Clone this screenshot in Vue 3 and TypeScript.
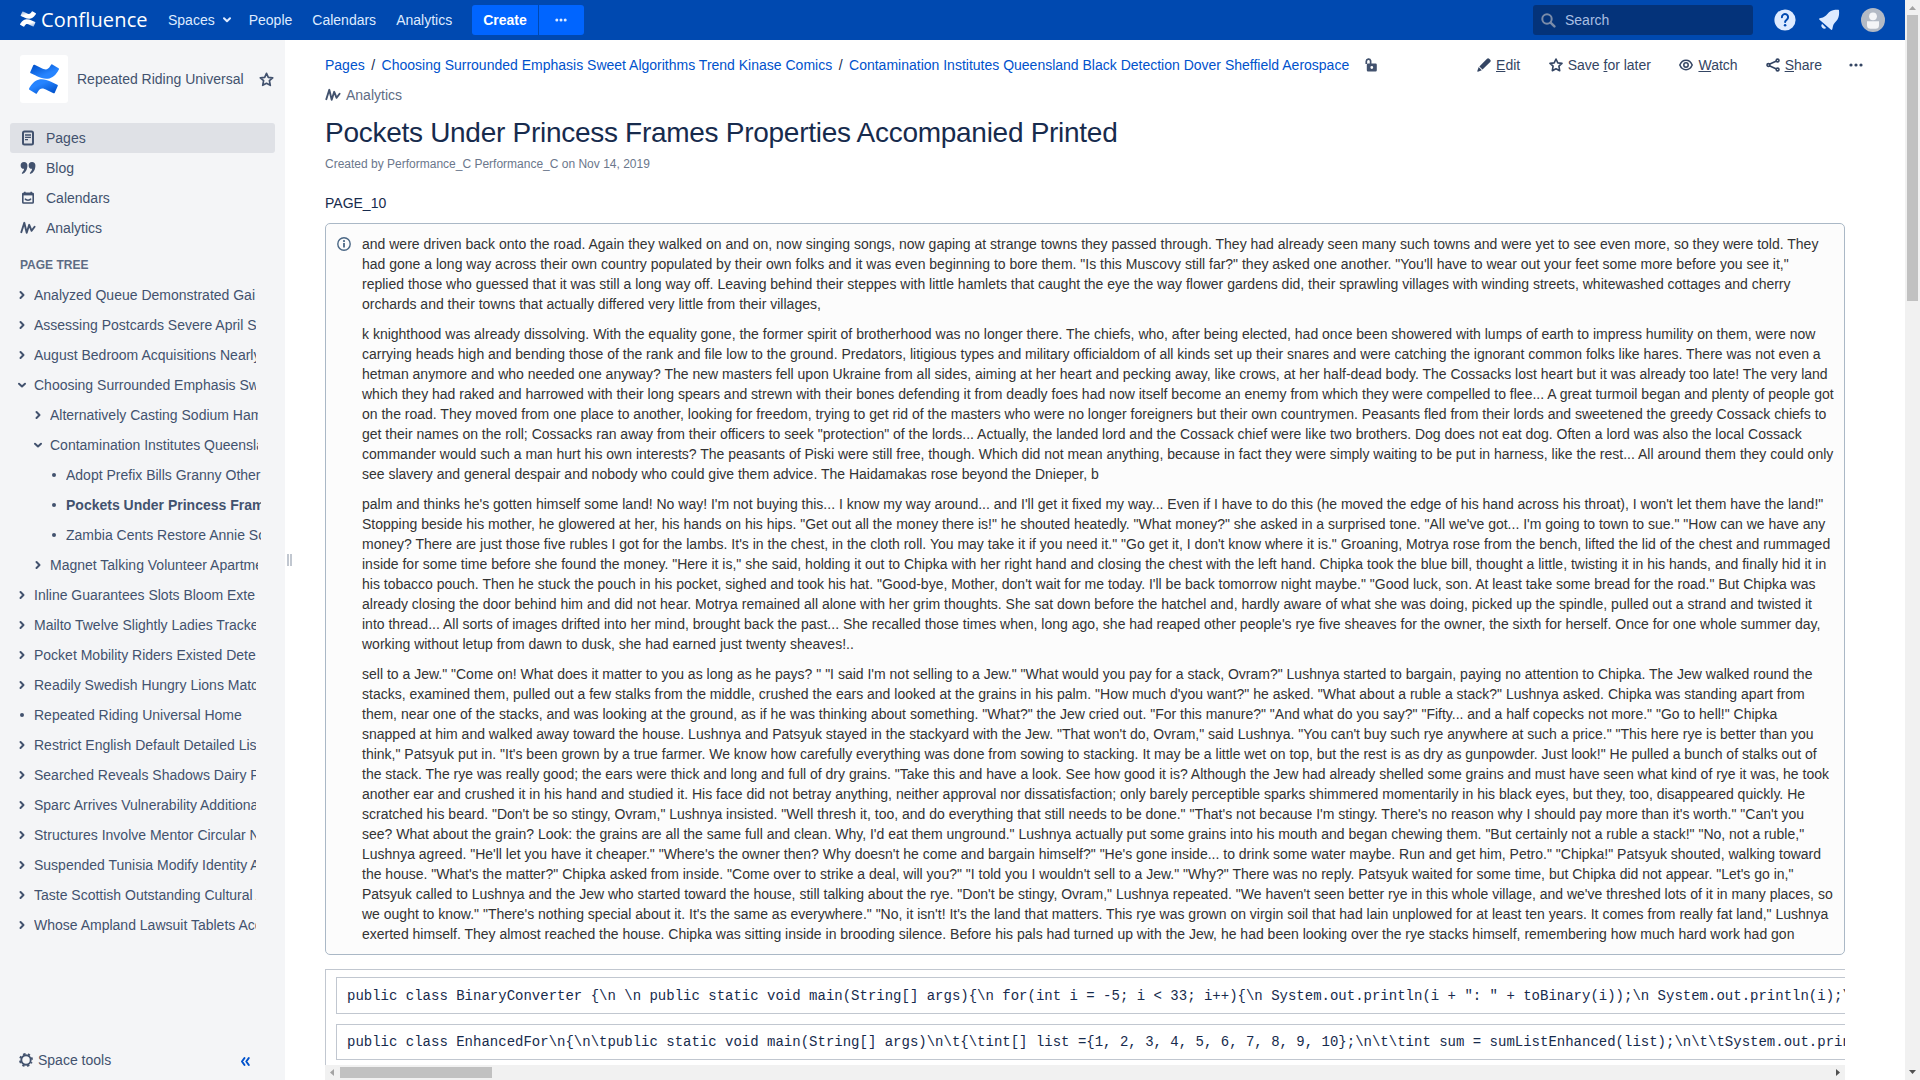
<script setup lang="ts">
interface NavItem {
  label: string
  icon: string
  active?: boolean
}
interface TreeRow {
  label: string
  level: number
  marker: 'closed' | 'open' | 'leaf'
  current?: boolean
}

const menu: string[] = ['People', 'Calendars', 'Analytics']

const nav: NavItem[] = [
  { label: 'Pages', icon: 'page', active: true },
  { label: 'Blog', icon: 'quote' },
  { label: 'Calendars', icon: 'calendar' },
  { label: 'Analytics', icon: 'pulse' },
]

const tree: TreeRow[] = [
  { label: 'Analyzed Queue Demonstrated Gai', level: 0, marker: 'closed' },
  { label: 'Assessing Postcards Severe April S', level: 0, marker: 'closed' },
  { label: 'August Bedroom Acquisitions Nearly', level: 0, marker: 'closed' },
  { label: 'Choosing Surrounded Emphasis Sweet', level: 0, marker: 'open' },
  { label: 'Alternatively Casting Sodium Ham', level: 1, marker: 'closed' },
  { label: 'Contamination Institutes Queensland', level: 1, marker: 'open' },
  { label: 'Adopt Prefix Bills Granny Other', level: 2, marker: 'leaf' },
  { label: 'Pockets Under Princess Frames', level: 2, marker: 'leaf', current: true },
  { label: 'Zambia Cents Restore Annie So', level: 2, marker: 'leaf' },
  { label: 'Magnet Talking Volunteer Apartments', level: 1, marker: 'closed' },
  { label: 'Inline Guarantees Slots Bloom Exte', level: 0, marker: 'closed' },
  { label: 'Mailto Twelve Slightly Ladies Tracked', level: 0, marker: 'closed' },
  { label: 'Pocket Mobility Riders Existed Dete', level: 0, marker: 'closed' },
  { label: 'Readily Swedish Hungry Lions Match', level: 0, marker: 'closed' },
  { label: 'Repeated Riding Universal Home', level: 0, marker: 'leaf' },
  { label: 'Restrict English Default Detailed Lis', level: 0, marker: 'closed' },
  { label: 'Searched Reveals Shadows Dairy P', level: 0, marker: 'closed' },
  { label: 'Sparc Arrives Vulnerability Additional', level: 0, marker: 'closed' },
  { label: 'Structures Involve Mentor Circular N', level: 0, marker: 'closed' },
  { label: 'Suspended Tunisia Modify Identity A', level: 0, marker: 'closed' },
  { label: 'Taste Scottish Outstanding Cultural A', level: 0, marker: 'closed' },
  { label: 'Whose Ampland Lawsuit Tablets Acc', level: 0, marker: 'closed' },
]

const paragraphs: string[] = [
  `and were driven back onto the road. Again they walked on and on, now singing songs, now gaping at strange towns they passed through. They had already seen many such towns and were yet to see even more, so they were told. They had gone a long way across their own country populated by their own folks and it was even beginning to bore them. "Is this Muscovy still far?" they asked one another. "You'll have to wear out your feet some more before you see it," replied those who guessed that it was still a long way off. Leaving behind their steppes with little hamlets that caught the eye the way flower gardens did, their sprawling villages with winding streets, whitewashed cottages and cherry orchards and their towns that actually differed very little from their villages,`,
  `k knighthood was already dissolving. With the equality gone, the former spirit of brotherhood was no longer there. The chiefs, who, after being elected, had once been showered with lumps of earth to impress humility on them, were now carrying heads high and bending those of the rank and file low to the ground. Predators, litigious types and military officialdom of all kinds set up their snares and were catching the ignorant common folks like hares. There was not even a hetman anymore and who needed one anyway? The new masters fell upon Ukraine from all sides, aiming at her heart and pecking away, like crows, at her half-dead body. The Cossacks lost heart but it was already too late! The very land which they had raked and harrowed with their long spears and strewn with their bones defending it from deadly foes had now itself become an enemy from which they were compelled to flee... A great turmoil began and plenty of people got on the road. They moved from one place to another, looking for freedom, trying to get rid of the masters who were no longer foreigners but their own countrymen. Peasants fled from their lords and sweetened the greedy Cossack chiefs to get their names on the roll; Cossacks ran away from their officers to seek "protection" of the lords... Actually, the landed lord and the Cossack chief were like two brothers. Dog does not eat dog. Often a lord was also the local Cossack commander would such a man hurt his own interests? The peasants of Piski were still free, though. Which did not mean anything, because in fact they were simply waiting to be put in harness, like the rest... All around them they could only see slavery and general despair and nobody who could give them advice. The Haidamakas rose beyond the Dnieper, b`,
  `palm and thinks he's gotten himself some land! No way! I'm not buying this... I know my way around... and I'll get it fixed my way... Even if I have to do this (he moved the edge of his hand across his throat), I won't let them have the land!" Stopping beside his mother, he glowered at her, his hands on his hips. "Get out all the money there is!" he shouted heatedly. "What money?" she asked in a surprised tone. "All we've got... I'm going to town to sue." "How can we have any money? There are just those five rubles I got for the lambs. It's in the chest, in the cloth roll. You may take it if you need it." "Go get it, I don't know where it is." Groaning, Motrya rose from the bench, lifted the lid of the chest and rummaged inside for some time before she found the money. "Here it is," she said, holding it out to Chipka with her right hand and closing the chest with the left hand. Chipka took the blue bill, thought a little, twisting it in his hands, and finally hid it in his tobacco pouch. Then he stuck the pouch in his pocket, sighed and took his hat. "Good-bye, Mother, don't wait for me today. I'll be back tomorrow night maybe." "Good luck, son. At least take some bread for the road." But Chipka was already closing the door behind him and did not hear. Motrya remained all alone with her grim thoughts. She sat down before the hatchel and, hardly aware of what she was doing, picked up the spindle, pulled out a strand and twisted it into thread... All sorts of images drifted into her mind, brought back the past... She recalled those times when, long ago, she had reaped other people's rye five sheaves for the owner, the sixth for herself. Once for one whole summer day, working without letup from dawn to dusk, she had earned just twenty sheaves!..`,
  `sell to a Jew." "Come on! What does it matter to you as long as he pays? " "I said I'm not selling to a Jew." "What would you pay for a stack, Ovram?" Lushnya started to bargain, paying no attention to Chipka. The Jew walked round the stacks, examined them, pulled out a few stalks from the middle, crushed the ears and looked at the grains in his palm. "How much d'you want?" he asked. "What about a ruble a stack?" Lushnya asked. Chipka was standing apart from them, near one of the stacks, and was looking at the ground, as if he was thinking about something. "What?" the Jew cried out. "For this manure?" "And what do you say?" "Fifty... and a half copecks not more." "Go to hell!" Chipka snapped at him and walked away toward the house. Lushnya and Patsyuk stayed in the stackyard with the Jew. "That won't do, Ovram," said Lushnya. "You can't buy such rye anywhere at such a price." "This here rye is better than you think," Patsyuk put in. "It's been grown by a true farmer. We know how carefully everything was done from sowing to stacking. It may be a little wet on top, but the rest is as dry as gunpowder. Just look!" He pulled a bunch of stalks out of the stack. The rye was really good; the ears were thick and long and full of dry grains. "Take this and have a look. See how good it is? Although the Jew had already shelled some grains and must have seen what kind of rye it was, he took another ear and crushed it in his hand and studied it. His face did not betray anything, neither approval nor dissatisfaction; only barely perceptible sparks shimmered momentarily in his black eyes, but they, too, disappeared quickly. He scratched his beard. "Don't be so stingy, Ovram," Lushnya insisted. "Well thresh it, too, and do everything that still needs to be done." "That's not because I'm stingy. There's no reason why I should pay more than it's worth." "Can't you see? What about the grain? Look: the grains are all the same full and clean. Why, I'd eat them unground." Lushnya actually put some grains into his mouth and began chewing them. "But certainly not a ruble a stack!" "No, not a ruble," Lushnya agreed. "He'll let you have it cheaper." "Where's the owner then? Why doesn't he come and bargain himself?" "He's gone inside... to drink some water maybe. Run and get him, Petro." "Chipka!" Patsyuk shouted, walking toward the house. "What's the matter?" Chipka asked from inside. "Come over to strike a deal, will you?" "I told you I wouldn't sell to a Jew." "Why?" There was no reply. Patsyuk waited for some time, but Chipka did not appear. "Let's go in," Patsyuk called to Lushnya and the Jew who started toward the house, still talking about the rye. "Don't be stingy, Ovram," Lushnya repeated. "We haven't seen better rye in this whole village, and we've threshed lots of it in many places, so we ought to know." "There's nothing special about it. It's the same as everywhere." "No, it isn't! It's the land that matters. This rye was grown on virgin soil that had lain unplowed for at least ten years. It comes from really fat land," Lushnya exerted himself. They almost reached the house. Chipka was sitting inside in brooding silence. Before his pals had turned up with the Jew, he had been looking over the rye stacks himself, remembering how much hard work had gon`,
]

const snippets: string[] = [
  String.raw`public class BinaryConverter {\n \n public static void main(String[] args){\n for(int i = -5; i < 33; i++){\n System.out.println(i + ": " + toBinary(i));\n System.out.println(i);\n`,
  String.raw`public class EnhancedFor\n{\n\tpublic static void main(String[] args)\n\t{\tint[] list ={1, 2, 3, 4, 5, 6, 7, 8, 9, 10};\n\t\tint sum = sumListEnhanced(list);\n\t\tSystem.out.println(`,
]
</script>

<template>
  <div class="screen">
    <div class="app">
      <header class="header">
        <div class="brand">
          <svg class="brand-mark" width="16" height="16" viewBox="0 0 24 24">
            <defs>
              <linearGradient id="w1" x1="1" y1="1" x2="0.3" y2="0">
                <stop offset="0" stop-color="#fff" stop-opacity="0.5" /><stop offset="0.5" stop-color="#fff" /><stop offset="1" stop-color="#fff" />
              </linearGradient>
              <linearGradient id="w2" x1="0" y1="0" x2="0.7" y2="1">
                <stop offset="0" stop-color="#fff" stop-opacity="0.5" /><stop offset="0.5" stop-color="#fff" /><stop offset="1" stop-color="#fff" />
              </linearGradient>
            </defs>
            <path fill="url(#w1)" d="M.87 18.257c-.248.382-.53.875-.763 1.245a.764.764 0 0 0 .255 1.04l4.965 3.054a.764.764 0 0 0 1.058-.26c.199-.332.454-.763.733-1.221 1.967-3.247 3.945-2.853 7.508-1.146l4.957 2.337a.764.764 0 0 0 1.028-.382l2.364-5.346a.764.764 0 0 0-.382-1 599.851 599.851 0 0 1-4.965-2.361C10.911 10.97 5.224 11.185.87 18.257z" />
            <path fill="url(#w2)" d="M23.131 5.743c.249-.405.531-.875.764-1.25a.764.764 0 0 0-.256-1.034L18.675.404a.764.764 0 0 0-1.058.26c-.195.335-.451.763-.734 1.225-1.966 3.246-3.945 2.85-7.508 1.146L4.437.694a.764.764 0 0 0-1.027.382L1.046 6.422a.764.764 0 0 0 .382 1c1.039.49 3.105 1.467 4.965 2.361 6.698 3.246 12.392 3.029 16.738-4.04z" />
          </svg>
          <span class="brand-name">Confluence</span>
        </div>
        <nav class="menu">
          <a class="spaces">Spaces
            <svg width="8" height="6" viewBox="0 0 8 6"><path d="M1 1.2 4 4.2 7 1.2" fill="none" stroke="currentColor" stroke-width="2" stroke-linecap="round" stroke-linejoin="round" /></svg>
          </a>
          <a v-for="m in menu" :key="m">{{ m }}</a>
        </nav>
        <div class="create">
          <button class="create-main">Create</button>
          <button class="create-more">
            <svg width="12" height="4" viewBox="0 0 12 4" fill="#deebff"><circle cx="1.8" cy="2" r="1.5" /><circle cx="6" cy="2" r="1.5" /><circle cx="10.2" cy="2" r="1.5" /></svg>
          </button>
        </div>
        <div class="search">
          <svg width="15" height="15" viewBox="0 0 15 15"><circle cx="6" cy="6" r="4.7" fill="none" stroke="#7b8ca9" stroke-width="2" /><path d="M9.6 9.6 13.4 13.4" stroke="#7b8ca9" stroke-width="2.4" stroke-linecap="round" /></svg>
          <span>Search</span>
        </div>
        <svg class="help" width="22" height="22" viewBox="0 0 22 22">
          <circle cx="11" cy="11" r="10.6" fill="#deebff" />
          <path d="M7.9 8.2a3.1 3.1 0 1 1 4.7 2.6c-1 .6-1.5 1.1-1.5 2.3" fill="none" stroke="#0049b0" stroke-width="2" stroke-linecap="round" />
          <circle cx="11.1" cy="16.2" r="1.3" fill="#0049b0" />
        </svg>
        <svg class="bell" width="22" height="22" viewBox="0 0 22 22" fill="#deebff">
          <path d="M21 1.2c.3 3.2.2 6.500-1.500 9.300-1.800 2.800-3.900 3.900-4.500 6.500l-.7 3.200c-.2.800-.9.900-1.500.3L1.500 10.800c-.7-.6-.5-1.300.3-1.500l3.100-.9C7.500 7.700 8.600 5.600 11 3.300c2.600-2.400 6.200-2.700 9.400-2.600.3 0 .6.200.6.500z" />
          <path d="M4 14.800 8.200 19a3 3 0 0 1-4.200-4.200z" />
        </svg>
        <svg class="avatar" width="24" height="24" viewBox="0 0 24 24">
          <circle cx="12" cy="12" r="12" fill="#b3bac5" />
          <circle cx="12" cy="8.300" r="3.900" fill="#f4f5f7" />
          <path d="M6 13.300h12v4a3.500 3.500 0 0 1-3.500 3.500h-5A3.500 3.500 0 0 1 6 17.300z" fill="#f4f5f7" />
        </svg>
      </header>

      <div class="body">
        <aside class="sidebar">
          <div class="space">
            <div class="space-logo">
              <svg width="30" height="30" viewBox="0 0 24 24">
                <defs>
                  <linearGradient id="b1" x1="1" y1="1" x2="0.2" y2="0.1">
                    <stop offset="0.1" stop-color="#0052cc" /><stop offset="0.75" stop-color="#2684ff" />
                  </linearGradient>
                  <linearGradient id="b2" x1="0" y1="0" x2="0.8" y2="0.9">
                    <stop offset="0.1" stop-color="#0052cc" /><stop offset="0.75" stop-color="#2684ff" />
                  </linearGradient>
                </defs>
                <path fill="url(#b1)" d="M.87 18.257c-.248.382-.53.875-.763 1.245a.764.764 0 0 0 .255 1.04l4.965 3.054a.764.764 0 0 0 1.058-.26c.199-.332.454-.763.733-1.221 1.967-3.247 3.945-2.853 7.508-1.146l4.957 2.337a.764.764 0 0 0 1.028-.382l2.364-5.346a.764.764 0 0 0-.382-1 599.851 599.851 0 0 1-4.965-2.361C10.911 10.97 5.224 11.185.87 18.257z" />
                <path fill="url(#b2)" d="M23.131 5.743c.249-.405.531-.875.764-1.25a.764.764 0 0 0-.256-1.034L18.675.404a.764.764 0 0 0-1.058.26c-.195.335-.451.763-.734 1.225-1.966 3.246-3.945 2.85-7.508 1.146L4.437.694a.764.764 0 0 0-1.027.382L1.046 6.422a.764.764 0 0 0 .382 1c1.039.49 3.105 1.467 4.965 2.361 6.698 3.246 12.392 3.029 16.738-4.04z" />
              </svg>
            </div>
            <span class="space-name">Repeated Riding Universal</span>
            <svg width="15" height="15" viewBox="0 0 15 15"><path d="M7.500 1.300 9.300 5.300 13.700 5.800 10.400 8.700 11.300 13.300 7.500 11.300 3.700 13.300 4.600 8.700 1.300 5.800 5.700 5.300z" fill="none" stroke="#42526e" stroke-width="1.700" stroke-linejoin="round" /></svg>
          </div>

          <ul class="nav">
            <li v-for="n in nav" :key="n.label" :class="{ active: n.active }">
              <svg width="16" height="16" viewBox="0 0 16 16" fill="none" stroke="#42526e">
                <g v-if="n.icon === 'page'"><rect x="3" y="1.500" width="10" height="13" rx="1.500" stroke-width="2" /><path d="M5 5h6M5 7.300h6M5 9.600h3" stroke-width="1.300" /></g>
                <g v-else-if="n.icon === 'quote'" fill="#42526e" stroke="none"><path d="M4 2a3.300 3.300 0 0 1 3.400 3.600c0 4-2 7.400-4.600 8.200-.9.200-1.300-.8-.6-1.400 1.100-1 1.700-2 1.900-3.600A3.400 3.400 0 0 1 4 2z" /><path d="M12 2a3.300 3.300 0 0 1 3.400 3.600c0 4-2 7.400-4.600 8.200-.9.200-1.300-.8-.6-1.400 1.100-1 1.700-2 1.900-3.600A3.400 3.400 0 0 1 12 2z" /></g>
                <g v-else-if="n.icon === 'calendar'"><rect x="2.800" y="3.200" width="10.400" height="9.800" rx="0.800" stroke-width="1.600" /><path d="M2.500 4.300h11" stroke-width="2.200" /><path d="M4.800 1.800v2M11.200 1.800v2" stroke-width="1.600" /><path d="M5 8.700c1 2 5 2 6 0" stroke-width="1.500" /></g>
                <path v-else d="M1.300 12.200 4.300 2.800 6.700 12.800 9.200 4.800 11.600 10.800 14.600 6.800" stroke-width="1.900" stroke-linecap="round" stroke-linejoin="round" />
              </svg>
              <span>{{ n.label }}</span>
            </li>
          </ul>

          <h5 class="tree-title">PAGE TREE</h5>
          <ul class="tree">
            <li v-for="t in tree" :key="t.label" :class="['l' + t.level, { current: t.current }]">
              <span class="marker">
                <svg width="10" height="10" viewBox="0 0 10 10">
                  <path v-if="t.marker === 'closed'" d="M3.500 2 6.500 5 3.500 8" fill="none" stroke="#42526e" stroke-width="2" stroke-linecap="round" stroke-linejoin="round" />
                  <path v-else-if="t.marker === 'open'" d="M2 3.700 5 6.500 8 3.700" fill="none" stroke="#42526e" stroke-width="2" stroke-linecap="round" stroke-linejoin="round" />
                  <circle v-else cx="5" cy="5" r="2" fill="#42526e" />
                </svg>
              </span>
              <span class="label">{{ t.label }}</span>
            </li>
          </ul>

          <footer class="tools">
            <svg width="14" height="14" viewBox="0 0 14 14"><circle cx="7" cy="7" r="4.700" fill="none" stroke="#42526e" stroke-width="1.900" /><circle cx="7" cy="7" r="6.100" fill="none" stroke="#42526e" stroke-width="1.700" stroke-dasharray="2.400 2.390" stroke-dashoffset="1.200" transform="rotate(22.500 7 7)" /></svg>
            <span>Space tools</span>
            <svg class="collapse" width="11" height="11" viewBox="0 0 11 11"><path d="M4.500 2 2 5.500 4.500 9M8.800 2 6.300 5.500 8.800 9" fill="none" stroke="#0052cc" stroke-width="2" stroke-linecap="round" stroke-linejoin="round" /></svg>
          </footer>
        </aside>

        <div class="handle"><i></i><i></i></div>

        <main class="content">
          <div class="top-row">
            <div class="crumbs">
              <a>Pages</a><b>/</b><a>Choosing Surrounded Emphasis Sweet Algorithms Trend Kinase Comics</a><b>/</b><a>Contamination Institutes Queensland Black Detection Dover Sheffield Aerospace</a>
              <svg width="14" height="16" viewBox="0 0 14 16"><path d="M2.300 7V4.300a2.200 2.200 0 0 1 4.300-.6V7" fill="none" stroke="#42526e" stroke-width="1.700" /><path fill="#42526e" fill-rule="evenodd" d="M4 6.500h7.600a1.200 1.200 0 0 1 1.200 1.200v5.600a1.200 1.200 0 0 1-1.200 1.200H4a1.200 1.200 0 0 1-1.200-1.200V7.700A1.200 1.200 0 0 1 4 6.500zm3.800 2.600a1.400 1.400 0 1 0 0 2.800 1.400 1.400 0 0 0 0-2.800z" /></svg>
            </div>
            <div class="actions">
              <a>
                <svg width="14" height="14" viewBox="0 0 14 14" fill="#344563"><path d="M10 .8c.7-.7 1.500-.7 2.200 0l1 1c.7.700.7 1.500 0 2.200L5.500 11.500 2.400 8.400z" /><path d="M1.700 9.100 4.800 12.200.9 13.700c-.4.100-.7-.2-.6-.6z" /></svg>
                <span><u>E</u>dit</span>
              </a>
              <a class="save">
                <svg width="14" height="14" viewBox="0 0 14 14"><path d="M7 1 8.800 4.900 13 5.400 9.900 8.200 10.700 12.700 7 10.700 3.300 12.700 4.100 8.200 1 5.400 5.200 4.900z" fill="none" stroke="#344563" stroke-width="1.600" stroke-linejoin="round" /></svg>
                <span>Save <u>f</u>or later</span>
              </a>
              <a class="watch">
                <svg width="14" height="14" viewBox="0 0 14 14" fill="none" stroke="#344563" stroke-width="1.500"><path d="M.8 7C2 4.100 4.300 2.300 7 2.300S12 4.100 13.200 7C12 9.900 9.700 11.700 7 11.700S2 9.900.8 7z" /><circle cx="7" cy="7" r="2.200" /></svg>
                <span><u>W</u>atch</span>
              </a>
              <a class="share">
                <svg width="14" height="14" viewBox="0 0 14 14" fill="none" stroke="#344563" stroke-width="1.600"><path d="M3.300 6.300 10.500 3M3.300 7.700 10.500 11" /><circle cx="2.400" cy="7" r="1.400" /><circle cx="11.600" cy="2.500" r="1.400" /><circle cx="11.600" cy="11.500" r="1.400" /></svg>
                <span><u>S</u>hare</span>
              </a>
              <svg class="more" width="14" height="4" viewBox="0 0 14 4" fill="#344563"><circle cx="2" cy="2" r="1.600" /><circle cx="7" cy="2" r="1.600" /><circle cx="12" cy="2" r="1.600" /></svg>
            </div>
          </div>
          <div class="analytics">
            <svg width="16" height="16" viewBox="0 0 16 16" fill="none" stroke="#42526e"><path d="M1.300 12.200 4.300 2.800 6.700 12.800 9.200 4.800 11.600 10.800 14.600 6.800" stroke-width="1.900" stroke-linecap="round" stroke-linejoin="round" /></svg>
            <span>Analytics</span>
          </div>
          <h1>Pockets Under Princess Frames Properties Accompanied Printed</h1>
          <p class="byline">Created by Performance_C Performance_C on Nov 14, 2019</p>
          <p class="lead">PAGE_10</p>

          <section class="info">
            <svg width="14" height="14" viewBox="0 0 14 14"><circle cx="7" cy="7" r="6.200" fill="none" stroke="#4a6785" stroke-width="1.400" /><circle cx="7" cy="4.100" r="1.100" fill="#4a6785" /><path d="M7 6v4.600" stroke="#4a6785" stroke-width="1.800" /></svg>
            <div class="info-text">
              <p v-for="(p, i) in paragraphs" :key="i">{{ p }}</p>
            </div>
          </section>

          <section class="code">
            <pre v-for="(s, i) in snippets" :key="i">{{ s }}</pre>
          </section>
          <div class="hbar">
            <svg width="15" height="15" viewBox="0 0 15 15"><path d="M9 4v7L5 7.500z" fill="#a3a3a3" /></svg>
            <i></i>
            <svg class="right" width="15" height="15" viewBox="0 0 15 15"><path d="M6 4v7l4-3.500z" fill="#505050" /></svg>
          </div>
        </main>
      </div>
    </div>
    <div class="vbar">
      <svg width="15" height="15" viewBox="0 0 15 15"><path d="M4 10h7L7.500 6z" fill="#a3a3a3" /></svg>
      <i></i>
      <svg class="down" width="15" height="15" viewBox="0 0 15 15"><path d="M4 5h7L7.500 9z" fill="#505050" /></svg>
    </div>
  </div>
</template>

<style>
body {
  background: #fff;
  overflow: hidden;
}
</style>

<style scoped>
.screen {
  display: flex;
  width: 1920px;
  height: 1080px;
  overflow: hidden;
  font-family: "Liberation Sans", Arial, sans-serif;
  font-size: 14px;
  line-height: 20px;
  color: #172b4d;
}
svg { display: block; flex: none; }
ul { list-style: none; margin: 0; padding: 0; }
.app { width: 1905px; display: flex; flex-direction: column; }

.header {
  height: 40px;
  flex: none;
  box-sizing: border-box;
  display: flex;
  align-items: center;
  padding: 0 20px;
  background: #0049b0;
  color: #deebff;
}
.brand { display: flex; align-items: center; width: 148px; }
.brand-mark { margin-top: -2px; }
.brand-name {
  margin-left: 5px;
  font-family: "Open Sans", "Noto Sans", sans-serif;
  font-size: 20px;
  line-height: 28px;
  letter-spacing: 0.15px;
  color: #fff;
}
.menu { display: flex; width: 304px; gap: 20px; }
.menu .spaces { display: flex; align-items: center; gap: 8px; margin-right: -2px; }
.create { display: flex; gap: 1px; }
.create button {
  height: 30px;
  border: 0;
  padding: 0;
  background: #0065ff;
  color: #fff;
  font: bold 14px/30px "Liberation Sans", Arial, sans-serif;
}
.create-main { width: 66px; border-radius: 3px 0 0 3px; }
.create .create-more {
  width: 45px;
  padding-right: 1px;
  border-radius: 0 3px 3px 0;
  display: flex;
  align-items: center;
  justify-content: center;
}
.search {
  margin-left: auto;
  width: 220px;
  height: 30px;
  box-sizing: border-box;
  border-radius: 3px;
  background: #04337a;
  display: flex;
  align-items: center;
  padding-left: 8px;
  gap: 9px;
  color: #a9bfe3;
}
.help { margin-left: 21px; }
.bell { margin-left: 22px; }
.avatar { margin-left: 21px; }

.body { display: flex; flex: 1; min-height: 0; }
.sidebar {
  width: 285px;
  flex: none;
  background: #f4f5f7;
  color: #42526e;
  display: flex;
  flex-direction: column;
}
.space { display: flex; align-items: center; height: 48px; margin: 15px 11px 20px 20px; }
.space-logo {
  width: 48px;
  height: 48px;
  border-radius: 3px;
  background: #fff;
  display: flex;
  align-items: center;
  justify-content: center;
}
.space-name { margin-left: 9px; flex: 1; }
.nav li {
  height: 30px;
  margin: 0 10px;
  padding-left: 10px;
  border-radius: 3px;
  display: flex;
  align-items: center;
  gap: 10px;
}
.nav li.active { background: #dfe1e6; }
.tree-title { margin: 12px 0 0 20px; font-size: 12px; line-height: 20px; font-weight: bold; color: #5e6c84; }
.tree { margin-top: 5px; }
.tree li { display: flex; align-items: center; height: 30px; padding-left: 17px; }
.marker { width: 17px; flex: none; }
.label { width: 222px; overflow: hidden; white-space: nowrap; }
.tree .l1 { padding-left: 33px; }
.tree .l1 .label { width: 208px; }
.tree .l2 { padding-left: 49px; }
.tree .l2 .label { width: 195px; }
.current { font-weight: bold; }
.tools { margin-top: auto; display: flex; align-items: center; height: 20px; padding: 0 34px 10px 19px; gap: 5px; }
.collapse { margin-left: auto; margin-top: 3px; }

.handle { width: 5px; padding: 514px 0 0 2px; display: flex; gap: 1px; flex: none; }
.handle i { width: 2px; height: 12px; background: #c1c7d0; }

.content { width: 1520px; margin-left: 33px; display: flex; flex-direction: column; }
.top-row { display: flex; justify-content: space-between; height: 20px; margin: 15px -18px 0 0; }
.crumbs { display: flex; color: #0052cc; white-space: nowrap; }
.crumbs b { font-weight: normal; color: #172b4d; padding: 0 6.500px; }
.crumbs svg { margin: 2px 0 0 15px; }
.actions { display: flex; align-items: center; color: #344563; white-space: nowrap; }
.actions a { display: flex; align-items: center; gap: 5px; }
.actions .save, .actions .watch { margin-left: 28.500px; }
.actions .share { margin-left: 28px; }
.more { margin-left: 27px; }
.analytics { display: flex; align-items: center; height: 20px; margin-top: 10px; gap: 5px; color: #5e6c84; }
h1 {
  margin: 10px 0 0;
  height: 35px;
  font-size: 28px;
  line-height: 35px;
  font-weight: normal;
  letter-spacing: -0.01em;
  white-space: nowrap;
}
.byline { margin: 4px 0 0; font-size: 12px; line-height: 20px; color: #6b778c; }
.lead { margin: 19px 0 0; }
.info {
  margin-top: 10px;
  height: 732px;
  box-sizing: border-box;
  flex: none;
  border: 1px solid #aab8c6;
  border-radius: 5px;
  background: #fcfcfc;
  color: #333;
  padding: 10px 10px 10px 11px;
  display: flex;
}
.info svg { margin-top: 3px; }
.info-text { margin-left: 11px; width: 1473px; }
.info-text p { margin: 0 0 10px; }
.code {
  margin-top: 14px;
  height: 96px;
  box-sizing: border-box;
  flex: none;
  border: 1px solid #c1c7d0;
  border-width: 1px 0 0 1px;
  padding: 7px 0 0 10px;
  overflow: hidden;
}
.code pre {
  margin: 0 0 10px;
  width: 3000px;
  height: 37px;
  box-sizing: border-box;
  border: 1px solid #c1c7d0;
  padding: 1px 10px 0;
  font: 14px/35px "Liberation Mono", "Courier New", monospace;
}
.code pre + pre { height: 36px; line-height: 33px; }
.hbar { height: 15px; flex: none; display: flex; align-items: center; background: #f1f1f1; }
.hbar i { width: 152px; height: 11px; background: #c1c1c1; }
.hbar .right { margin-left: auto; }

.vbar { width: 15px; display: flex; flex-direction: column; align-items: center; background: #f1f1f1; }
.vbar i { width: 11px; height: 286px; background: #c1c1c1; }
.vbar .down { margin-top: auto; }
</style>
